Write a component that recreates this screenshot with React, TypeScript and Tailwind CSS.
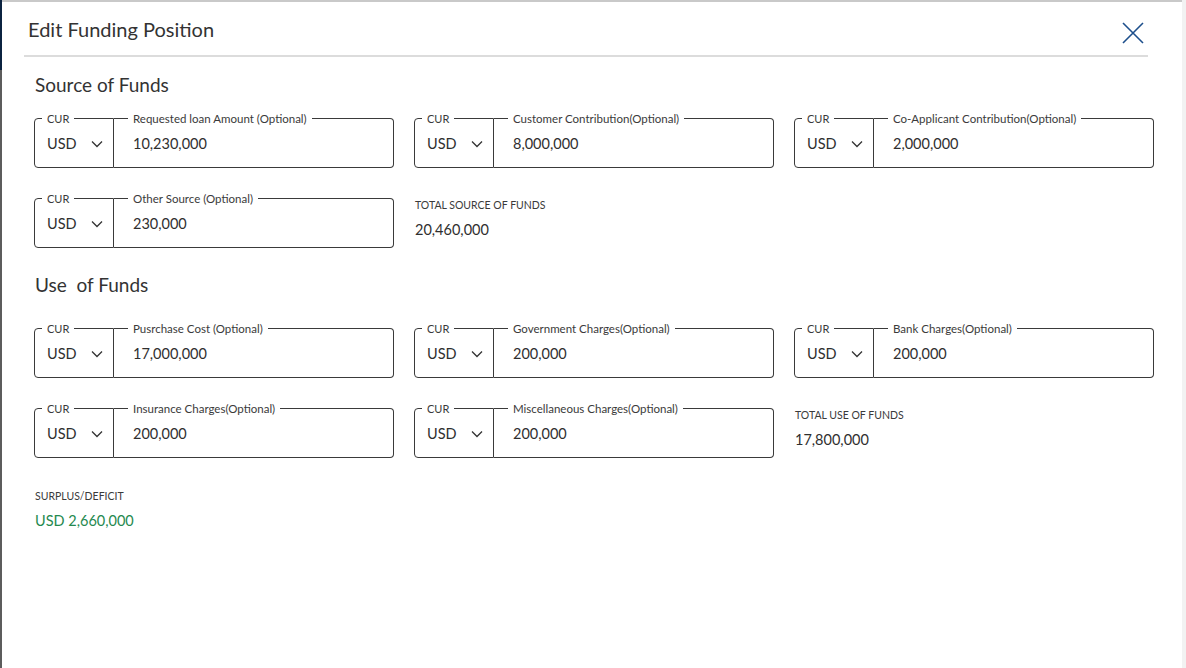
import React from "react";

type F = { label: string; value: string };

function Chevron() {
  return (
    <svg width="12" height="8" viewBox="0 0 12 8" fill="none">
      <path d="M1 1.5 L6 6.5 L11 1.5" stroke="#333" strokeWidth="1.3" />
    </svg>
  );
}

function Field({ label, value }: F) {
  return (
    <div className="flex h-[50px] w-[360px]">
      <div className="relative flex w-[80px] items-center justify-between rounded-l-[4px] border border-[#3a3a3a] pl-[12px] pr-[10px] pt-[2px]">
        <span className="absolute left-[7px] top-[-7px] bg-white px-[5px] text-[11px] leading-[14px] text-[#3a3a3a]">CUR</span>
        <span className="text-[14.5px] text-[#2f2f2f]">USD</span>
        <Chevron />
      </div>
      <div className="relative flex flex-1 items-center rounded-r-[4px] border border-l-0 border-[#3a3a3a] pl-[19px] pt-[2px]">
        <span className="absolute left-[14px] top-[-7px] bg-white px-[5px] text-[11.5px] leading-[14px] whitespace-nowrap text-[#3a3a3a]">{label}</span>
        <span className="text-[14.5px] text-[#2f2f2f]">{value}</span>
      </div>
    </div>
  );
}

function Total({ label, value }: F) {
  return (
    <div className="pl-[1px]">
      <div className="text-[10.5px] leading-[14px] text-[#3a3a3a]">{label}</div>
      <div className="mt-[9px] text-[14.5px] leading-[18px] text-[#2f2f2f]">{value}</div>
    </div>
  );
}

export default function App() {
  return (
    <div
      className="flex h-[668px] w-[1186px] overflow-hidden bg-white"
      style={{ fontFamily: "Lato, 'Noto Sans', sans-serif" }}
    >
      <div className="flex w-[2px] flex-col">
        <div className="h-[70px] bg-[#0b2340]" />
        <div className="flex-1 bg-[#5c5c5c]" />
      </div>
      <div className="flex-1 border-t-2 border-[#c9c9c9]">
        <div className="ml-[22px] mr-[34px] flex h-[55px] items-start justify-between border-b-2 border-[#dcdcdc]">
          <h1 className="pl-[4px] pt-[14px] text-[20px] leading-[26px] text-[#333]">Edit Funding Position</h1>
          <svg className="mr-[4px] mt-[20px]" width="22" height="22" viewBox="0 0 22 22" fill="none">
            <path d="M1 1 L21 21 M21 1 L1 21" stroke="#1d4f8c" strokeWidth="1.6" />
          </svg>
        </div>
        <div className="pl-[32px]">
          <h2 className="mt-[15px] pl-[1px] text-[19px] leading-[26px] text-[#333]">Source of Funds</h2>
          <div className="mt-[20px] grid grid-cols-[360px_360px_360px] gap-x-[20px] gap-y-[30px]">
            <Field label="Requested loan Amount (Optional)" value="10,230,000" />
            <Field label="Customer Contribution(Optional)" value="8,000,000" />
            <Field label="Co-Applicant Contribution(Optional)" value="2,000,000" />
            <Field label="Other Source (Optional)" value="230,000" />
            <Total label="TOTAL SOURCE OF FUNDS" value="20,460,000" />
          </div>
          <h2 className="mt-[24px] pl-[1px] text-[19px] leading-[26px] text-[#333] whitespace-pre">Use  of Funds</h2>
          <div className="mt-[30px] grid grid-cols-[360px_360px_360px] gap-x-[20px] gap-y-[30px]">
            <Field label="Pusrchase Cost (Optional)" value="17,000,000" />
            <Field label="Government Charges(Optional)" value="200,000" />
            <Field label="Bank Charges(Optional)" value="200,000" />
            <Field label="Insurance Charges(Optional)" value="200,000" />
            <Field label="Miscellaneous Charges(Optional)" value="200,000" />
            <Total label="TOTAL USE OF FUNDS" value="17,800,000" />
          </div>
          <div className="mt-[31px] pl-[1px]">
            <div className="text-[10.5px] leading-[14px] text-[#3a3a3a]">SURPLUS/DEFICIT</div>
            <div className="mt-[9px] text-[14.5px] leading-[18px] text-[#25894f]">USD 2,660,000</div>
          </div>
        </div>
      </div>
      <div className="w-[4px] bg-[#f2f2f2]" />
    </div>
  );
}
